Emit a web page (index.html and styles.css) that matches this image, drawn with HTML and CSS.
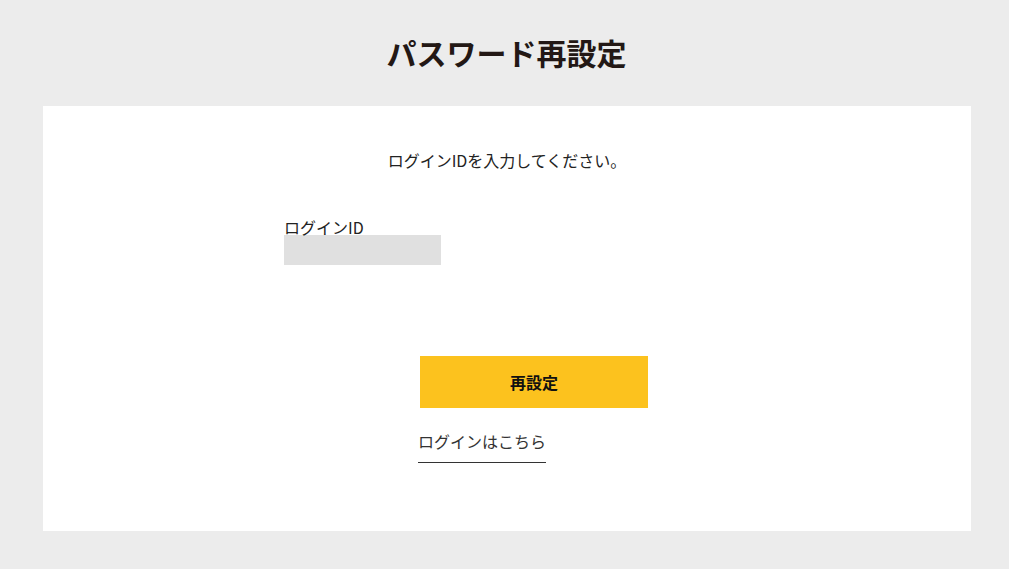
FILE: index.html
```html
<!DOCTYPE html>
<html lang="ja">
<head>
    <meta charset="UTF-8">
    <meta name="viewport" content="width=device-width, initial-scale=1.0">
    <title>パスワード再設定</title>
    <link rel="stylesheet" href="styles.css">
</head>
<body>

<h1 class="page-title">パスワード再設定</h1>

<div class="card">
    <p class="intro">ログインIDを入力してください。</p>

    <form class="reset-form">
        <label class="field-label" for="loginId">ログインID</label>
        <input class="field-input" type="text" id="loginId">

        <div class="actions">
            <button class="submit-btn" type="button">再設定</button>
            <a class="login-link" href="#">ログインはこちら</a>
        </div>
    </form>
</div>

</body>
</html>
```

FILE: styles.css
```css
body {
    margin: 0;
    background-color: #ececec;
    font-family: "Noto Sans CJK JP", "Noto Sans", sans-serif;
    color: #222;
}
.page-title {
    margin: 0;
    padding: 30px 0 31px 4px;
    font-size: 30px;
    line-height: 45px;
    font-weight: bold;
    text-align: center;
    color: #231815;
}
.card {
    margin: 0 38px 0 43px;
    padding: 42px 0 68px;
    background-color: #fff;
}
.intro {
    margin: 0;
    font-size: 16px;
    line-height: 24px;
    text-align: center;
}
.reset-form {
    width: 446px;
    margin: 48px auto 0;
}
.field-label {
    display: block;
    font-size: 16px;
    line-height: 15px;
}
.field-input {
    display: block;
    width: 157px;
    height: 30px;
    padding: 0 8px;
    border: none;
    background-color: #e0e0e0;
    box-sizing: border-box;
    font-family: inherit;
}
.actions {
    margin: 91px 0 0 134px;
}
.submit-btn {
    display: block;
    width: 228px;
    height: 52px;
    margin-left: 2px;
    border: none;
    background-color: #fcc21e;
    font-family: inherit;
    font-size: 16px;
    font-weight: bold;
    color: #111;
    cursor: pointer;
}
.login-link {
    display: inline-block;
    margin-top: 21px;
    padding-bottom: 9px;
    border-bottom: 1px solid #333;
    font-size: 16px;
    line-height: 24px;
    color: #333;
    text-decoration: none;
}
```
